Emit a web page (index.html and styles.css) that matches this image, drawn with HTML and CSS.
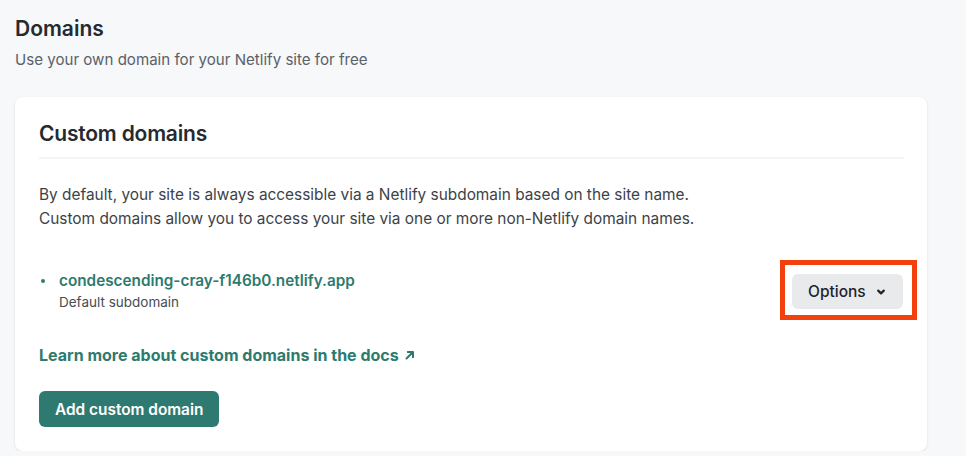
FILE: index.html
```html
<!DOCTYPE html>
<html>
<head>
<meta charset="utf-8">
<link rel="stylesheet" href="styles.css">
</head>
<body>
<div class="page">
  <h1 class="title">Domains</h1>
  <p class="subtitle">Use your own domain for your Netlify site for free</p>
  <section class="card">
    <h2 class="card-title">Custom domains</h2>
    <p class="desc">By default, your site is always accessible via a Netlify subdomain based on the site name.<br>Custom domains allow you to access your site via one or more non-Netlify domain names.</p>
    <div class="domain-row">
      <ul class="domain-list">
        <li>
          <a class="domain-link">condescending-cray-f146b0.netlify.app</a>
          <div class="domain-note">Default subdomain</div>
        </li>
      </ul>
      <div class="highlight">
        <button class="options-btn">Options <svg class="chev" width="10" height="10" viewBox="0 0 10 10"><path d="M2.2 3.6 L5 6.4 L7.8 3.6" fill="none" stroke="#1f2429" stroke-width="2.2" stroke-linecap="round" stroke-linejoin="round"/></svg></button>
      </div>
    </div>
    <a class="docs-link">Learn more about custom domains in the docs <svg class="arrow" width="12" height="12" viewBox="0 0 12 12"><path d="M2.5 9.5 L8.5 3.5 M3.8 3 H9 V8.2" fill="none" stroke="#2d7a6f" stroke-width="2" stroke-linecap="round" stroke-linejoin="round"/></svg></a>
    <div class="actions">
      <button class="primary-btn">Add custom domain</button>
    </div>
  </section>
</div>
</body>
</html>
```

FILE: styles.css
```css
* { box-sizing: border-box; }
html, body {
  margin: 0;
  background: #f6f8f9;
  font-family: Inter, "Noto Sans", sans-serif;
  color: #2b3036;
}
.page {
  padding: 15px 39px 0 15px;
}
.title {
  margin: 0;
  font-size: 21px;
  font-weight: 600;
  line-height: 28px;
  color: #252a30;
}
.subtitle {
  margin: 6px 0 0;
  font-size: 15.1px;
  line-height: 22px;
  color: #5a6168;
}
.card {
  margin-top: 26px;
  background: #fff;
  border-radius: 8px;
  box-shadow: 0 1px 3px rgba(20, 30, 40, 0.10);
  padding: 23px 23px 24px 24px;
}
.card-title {
  margin: 0;
  font-size: 21px;
  font-weight: 600;
  line-height: 28px;
  padding-bottom: 9px;
  border-bottom: 2px solid #f3f4f5;
  color: #252a30;
  letter-spacing: -0.2px;
}
.desc {
  margin: 24px 0 0;
  font-size: 15.4px;
  line-height: 24px;
  color: #3c4248;
}
.domain-row {
  display: flex;
  justify-content: space-between;
  align-items: center;
  margin-top: 29px;
  margin-right: -13px;
}
.domain-list {
  margin: 0;
  padding: 0 0 0 20px;
  list-style: none;
}
.domain-list li { position: relative; }
.domain-list li::before {
  content: "";
  position: absolute;
  left: -18px;
  top: 9px;
  width: 4px;
  height: 4px;
  border-radius: 50%;
  background: #2d7a6f;
}
.domain-link {
  font-size: 15.3px;
  font-weight: 600;
  line-height: 22px;
  color: #2d7a6f;
}
.domain-note {
  margin-top: 1px;
  font-size: 13.5px;
  line-height: 18px;
  color: #464c52;
}
.highlight {
  border: 5px solid #f2400e;
  padding: 9px 9px 6px 7px;
}
.options-btn {
  display: flex;
  align-items: center;
  gap: 10px;
  height: 35px;
  width: 111px;
  padding: 0 0 0 16px;
  border: 0;
  border-radius: 6px;
  background: #e8eaec;
  font-family: inherit;
  font-size: 15.5px;
  font-weight: 500;
  color: #1f2429;
}
.docs-link {
  display: inline-flex;
  align-items: center;
  gap: 5px;
  margin-top: 24px;
  font-size: 16px;
  font-weight: 700;
  line-height: 22px;
  color: #2d7a6f;
}
.actions { margin-top: 25px; }
.primary-btn {
  height: 36px;
  padding: 0 16px;
  border: 0;
  border-radius: 6px;
  background: #2f7a70;
  color: #fff;
  font-family: inherit;
  font-size: 15.4px;
  font-weight: 600;
}
```
